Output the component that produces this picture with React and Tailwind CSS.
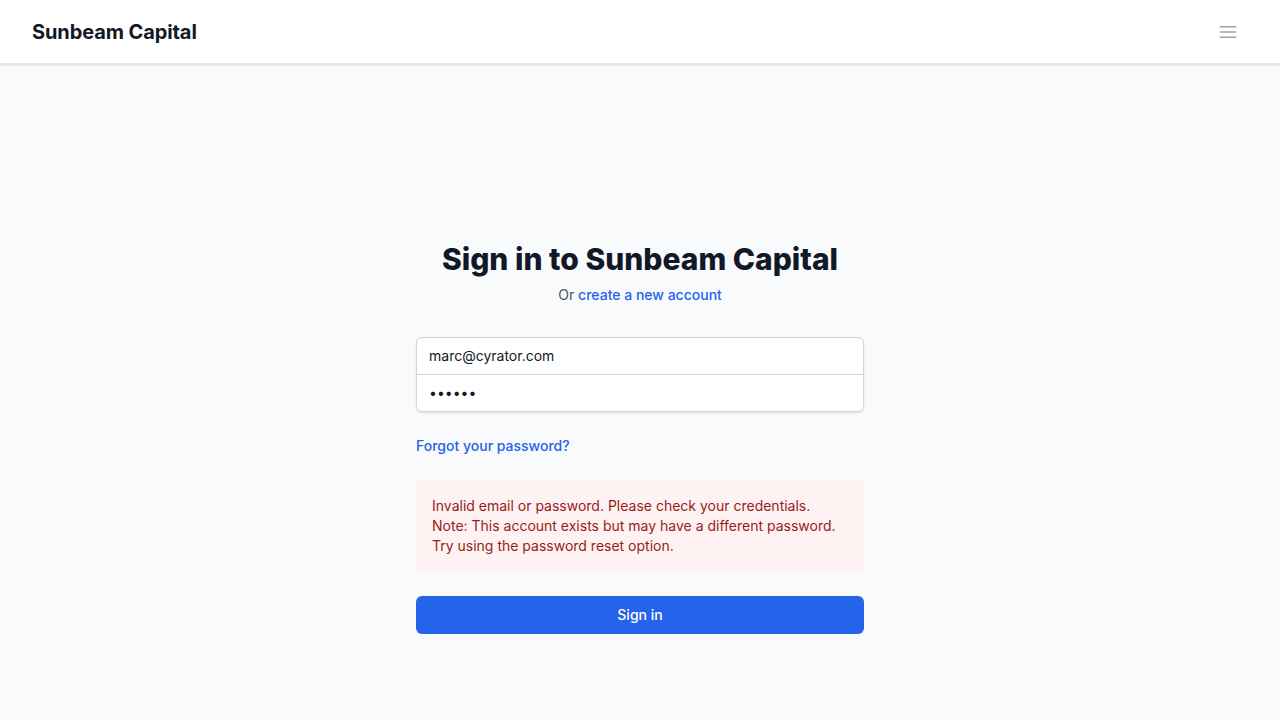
export default function App() {
  return (
    <div className="min-h-screen bg-[#f9fafb] flex flex-col" style={{ fontFamily: "Inter, 'Noto Sans', sans-serif" }}>
      <header className="h-16 bg-white border-b border-[#e5e7eb] shadow-sm flex items-center justify-between px-8">
        <div className="text-xl font-bold text-[#111827] tracking-[-0.1px]">Sunbeam Capital</div>
        <button className="p-2 text-[#9ca3af]">
          <svg className="w-6 h-6" fill="none" viewBox="0 0 24 24" stroke="currentColor" strokeWidth="1.5">
            <path strokeLinecap="butt" d="M3.75 6.75h16.5M3.75 12h16.5m-16.5 5.25h16.5" />
          </svg>
        </button>
      </header>
      <main className="flex-1 flex justify-center pt-[177px]">
        <div className="w-[448px]">
          <h2 className="text-center text-3xl font-extrabold text-[#111827] leading-9">Sign in to Sunbeam Capital</h2>
          <p className="mt-2 text-center text-sm text-[#4b5563]">
            Or <span className="font-medium text-[#2563eb]">create a new account</span>
          </p>
          <div className="mt-8 rounded-md shadow-sm -space-y-px">
            <input
              className="block w-full px-3 py-2 border border-[#d1d5db] rounded-t-md text-sm text-[#111827] bg-white outline-none"
              defaultValue="marc@cyrator.com"
            />
            <input
              type="password"
              className="block w-full px-3 py-2 border border-[#d1d5db] rounded-b-md text-sm text-[#111827] bg-white outline-none"
              defaultValue="secret"
            />
          </div>
          <div className="mt-6 text-sm font-medium text-[#2563eb]">Forgot your password?</div>
          <div className="mt-6 rounded-md bg-[#fef2f2] p-4 text-sm text-[#991b1b]">
            <p>Invalid email or password. Please check your credentials.</p>
            <p>Note: This account exists but may have a different password.</p>
            <p>Try using the password reset option.</p>
          </div>
          <button className="mt-6 w-full py-2 px-4 rounded-md bg-[#2563eb] text-white text-sm font-medium border border-transparent">
            Sign in
          </button>
        </div>
      </main>
    </div>
  );
}
